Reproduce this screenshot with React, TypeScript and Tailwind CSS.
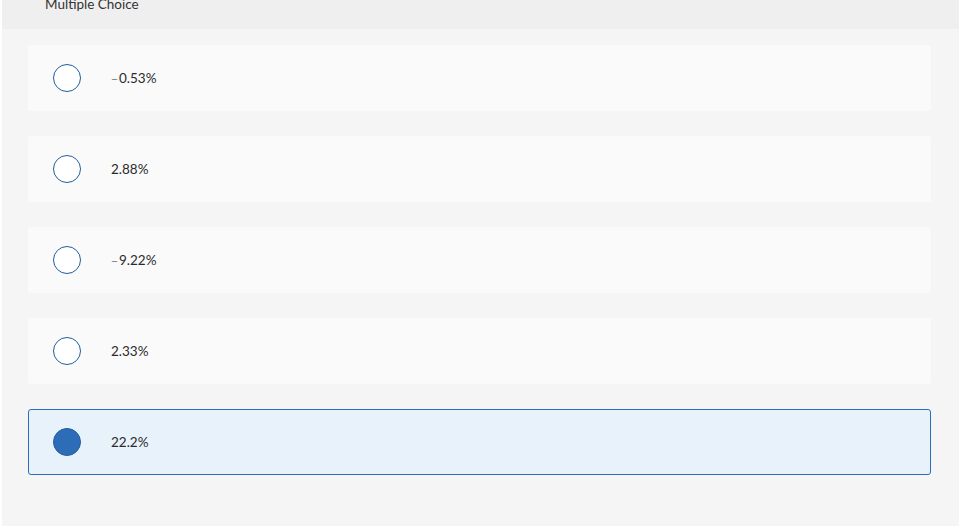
import React from "react";

type Option = { id: string; sign?: boolean; value: string; selected?: boolean };

const OPTIONS: Option[] = [
  { id: "a", sign: true, value: "0.53%" },
  { id: "b", value: "2.88%" },
  { id: "c", sign: true, value: "9.22%" },
  { id: "d", value: "2.33%" },
  { id: "e", value: "22.2%", selected: true },
];

function Radio({ checked }: { checked?: boolean }) {
  return checked ? (
    <span className="block h-[28px] w-[28px] shrink-0 rounded-full border border-[#235d9e] bg-[#2d6db8]" />
  ) : (
    <span className="block h-[28px] w-[28px] shrink-0 rounded-full border-[1.5px] border-[#1f5f9c] bg-white" />
  );
}

function Choice({ option }: { option: Option }) {
  return (
    <div
      className={
        option.selected
          ? "flex h-[66px] items-center rounded-[3px] border border-[#2a6ebb] bg-[#e8f2fb] pl-[24px]"
          : "flex h-[66px] items-center rounded-[3px] bg-[#fafafa] pl-[25px]"
      }
    >
      <Radio checked={option.selected} />
      <span className="ml-[30px] text-[13.5px] leading-[16px] text-[#2b2b2b]">
        {option.sign && <span className="mr-[1px] text-[12px] text-[#777]">−</span>}
        {option.value}
      </span>
    </div>
  );
}

export default function App() {
  return (
    <div
      className="flex h-[526px] w-[975px] overflow-hidden bg-white"
      style={{ fontFamily: "Lato, 'Open Sans', sans-serif" }}
    >
      <div className="ml-[2px] flex w-[957px] flex-col bg-[#f5f5f5]">
        <div className="h-[29px] shrink-0 bg-[#efefef] pl-[43px]">
          <p className="-mt-[4px] text-[13.5px] leading-[16px] text-[#333]">
            Multiple Choice
          </p>
        </div>
        <div className="flex flex-col gap-[25px] pl-[26px] pr-[28px] pt-[16px]">
          {OPTIONS.map((option) => (
            <Choice key={option.id} option={option} />
          ))}
        </div>
      </div>
    </div>
  );
}
